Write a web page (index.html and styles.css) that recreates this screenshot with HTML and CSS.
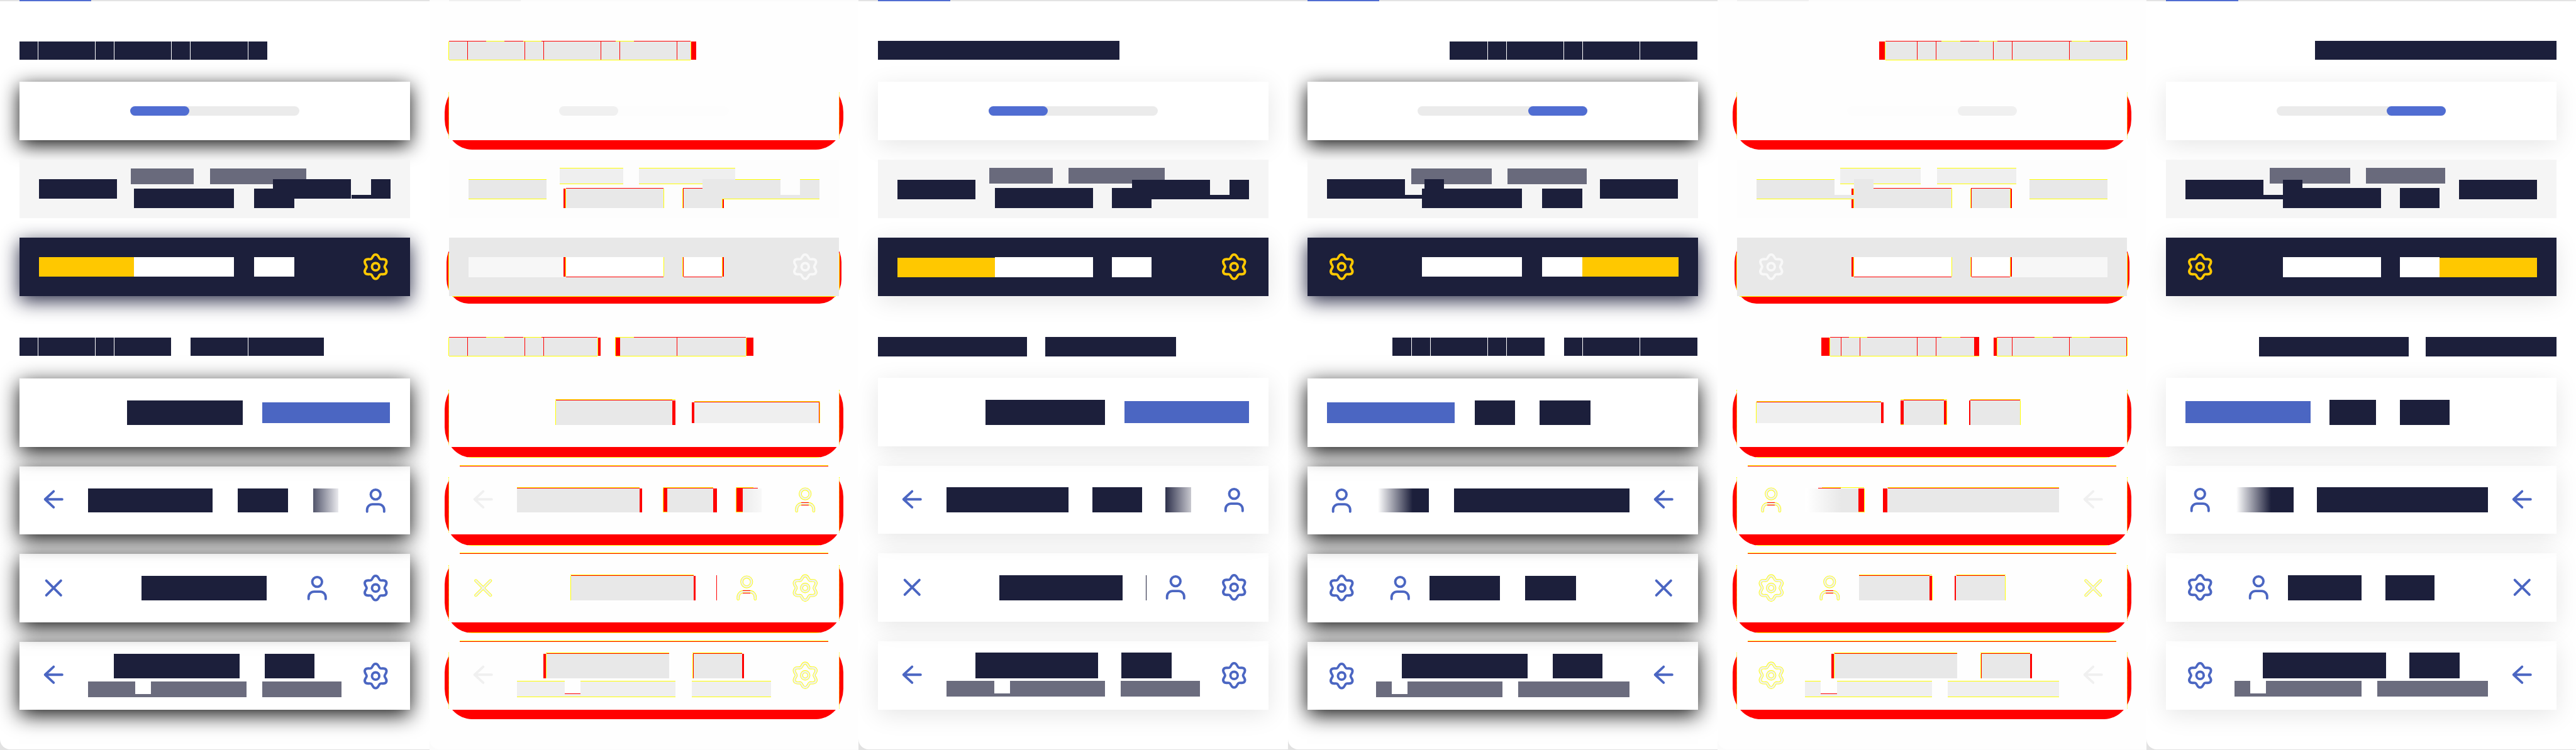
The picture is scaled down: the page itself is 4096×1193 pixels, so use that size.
FILE: index.html
```html
<!DOCTYPE html>
<html lang="en">
<head>
<meta charset="utf-8">
<title>Navigation bar snapshots</title>
<link rel="stylesheet" href="styles.css">
</head>
<body>
<svg class="defs" aria-hidden="true">
  <symbol id="gear" viewBox="-24 -24 48 48">
    <path d="M0-20C5-20 4.75-14.23 7.35-12.73C9.95-11.23 14.82-14.33 17.32-10C19.82-5.67 14.7-3 14.7 0C14.7 3 19.82 5.67 17.32 10C14.82 14.33 9.95 11.23 7.35 12.73C4.75 14.23 5 20 0 20C-5 20-4.75 14.23-7.35 12.73C-9.95 11.23-14.82 14.33-17.32 10C-19.82 5.67-14.7 3-14.7 0C-14.7-3-19.82-5.67-17.32-10C-14.82-14.33-9.95-11.23-7.35-12.73C-4.75-14.23-5-20 0-20Z"/>
    <circle r="6"/>
  </symbol>
  <symbol id="person" viewBox="-24 -24 48 48">
    <circle cy="-10" r="8"/>
    <path d="M-14 18V15A9 9 0 0 1-5 6H5A9 9 0 0 1 14 15V18"/>
  </symbol>
  <symbol id="arrow" viewBox="-24 -24 48 48">
    <path d="M0-13L-14 0L0 13M-14 0H14"/>
  </symbol>
  <symbol id="close" viewBox="-24 -24 48 48">
    <path d="M-12-12L12 12M12-12L-12 12"/>
  </symbol>
</svg>
<main class="board" id="board"></main>
<script src="panels.js"></script>
</body>
</html>
```
FILE: styles.css
```css
* { box-sizing: border-box; }

html, body {
  margin: 0;
  background: #fff;
  overflow: hidden;
}

.defs { display: none; }

.board {
  display: flex;
  width: 4224px;
  height: 1230px;
  zoom: 0.969697;
}

.panel {
  flex: none;
  width: 704px;
  height: 1230px;
  overflow: hidden;
  background: #e2e2e2;
}

.sheet {
  display: flex;
  flex-direction: column;
  height: 1229px;
  background: #fff;
  border-bottom-left-radius: 17px;
  overflow: hidden;
}

.tabs {
  flex: none;
  height: 2px;
  padding-left: 32px;
  background: #e3e3e3;
}
.tabs-mark { width: 118px; height: 2px; background: #506dd2; }

.heading { flex: none; display: grid; height: 32px; margin-top: 65px; }
.heading.second { margin-top: 67px; }

.card {
  flex: none;
  position: relative;
  height: 96px;
  margin: 32px 32px 0;
}
.heading + .card { margin-top: 35px; }
.heading.second + .card { margin-top: 36px; }
.card.tall { height: 112px; }
.panel.soft .heading.second + .card { margin-top: 35px; }
.card.n4 { z-index: 4; }
.card.n5 { z-index: 3; }
.card.n6 { z-index: 2; }
.card.n7 { z-index: 1; }

.face {
  position: relative;
  display: grid;
  height: 100%;
  background: #fff;
}
.card.muted .face { background: #f5f5f5; }
.card.dark .face { background: #1c1f3b; }

.hard .face { box-shadow: 0 8px 32px rgba(0, 0, 0, .95); }
.hard .dark .face { box-shadow: 0 8px 32px rgba(28, 31, 59, .95); }
.soft .face { box-shadow: 0 8px 40px rgba(0, 0, 0, .1); }
.hard .muted .face, .soft .muted .face, .diff .muted .face { box-shadow: none; }

.layer {
  grid-area: 1 / 1;
  display: flex;
  align-self: start;
}
.bar { flex: none; height: 100%; }

.k { background: #1c1f3b; }
.s { background: #6b6c7e; }
.m { background: #696a7c; }
.b { background: #4b66c2; }
.g { background: #ffc800; }
.w { background: #fff; }
.r { background: #f00; }
.y { background: #ff0; }
.e { background: #e8e8e8; }
.f { background: #efefef; }
.p { background: #f7f7f7; }
.fade-a { background: linear-gradient(90deg, #52556b, #eaeaee); }
.fade-c { background: linear-gradient(90deg, #2d304b, #c8c8cf); }
.fade-d { background: linear-gradient(90deg, #fff 0, #fff 3px, #1c1f3b 60px); }
.fade-b { background: linear-gradient(90deg, #ececec, #f8f8f8); }
.fade-e { background: linear-gradient(90deg, #fff 0, #fff 3px, #e8e8e8 60px); }

.track, .fill { height: 16px; border-radius: 8px; }
.track { display: flex; background: #ebebeb; }
.fill { width: 97px; background: #506dd2; }
.end .track { justify-content: flex-end; }

.icon {
  flex: none;
  width: 48px;
  height: 48px;
  fill: none;
  stroke: #4b66c2;
  stroke-width: 4;
  stroke-linecap: round;
  stroke-linejoin: round;
}
.dark .icon { stroke: #ffc800; }

/* difference panels */
.panel.diff { background: #fbfbfb; }
.diff .sheet { background: #fefefe; }
.diff .tabs { background: #fbfbfb; }
.diff .tabs-mark { background: #f0f0f0; }
.diff .track { background: #fdfdfd; }
.diff .fill { background: #f0f0f0; }
.diff .face { background: #fefefe; }
.diff .muted .face { background: #fdfdfd; }
.diff .dark .face { background: #e8e8e8; }
.diff .card { background: none; }
.diff .icon { stroke: #f0f0f0; }
.diff .dark .icon { stroke: #f8f8f8; }
.diff .icon.edge { stroke: #ff0; stroke-width: 4.8; }
.diff .icon.core { stroke-width: 3; }

.diff .card::before {
  content: "";
  position: absolute;
  inset: 0 -7px -15px;
  border-radius: 45px / 50px;
  background: #f00;
}
.diff .card.muted::before { display: none; }
.diff .card.dark::before { inset: 0 -4px -12px; border-radius: 36px / 40px; }
.diff .card.n4::before, .diff .card.n5::before, .diff .card.n6::before {
  bottom: -18px;
  background: linear-gradient(#ff0, #ff0) center bottom / 578px 1px no-repeat #f00;
}
.diff .face::before {
  content: "";
  position: absolute;
  inset: 18px -1px 3px;
  border: 0 dotted #ff0;
  border-width: 0 1px;
}
.diff .dark .face::before { inset: 26px -1px 10px; border-style: solid; }
.diff .muted .face::before { display: none; }
.diff .dark .face::after {
  content: "";
  position: absolute;
  inset: auto 5px -1px;
  height: 1px;
  background: #ff0;
}
.diff .n5::after, .diff .n6::after, .diff .n7::after {
  content: "";
  position: absolute;
  inset: -2px 18px auto;
  height: 2px;
  background: linear-gradient(#ff0 50%, #f00 50%);
}
```
FILE: panels.js
```js
// A layer is "top height | from to tone, ...", in panel coordinates.
// Icons are "name centre-x centre-y".

const TALL = [621, 765, 909, 1053];

const ticks = (tone, xs) => "68 30 | " + xs.map(x => `${x} ${x + 1} ${tone}`).join(", ");

const subLine = (top, first, cutA, cutB, endA, startB, tone) => [
  `${top} 26 | ${first} ${cutA} ${tone}, ${cutB} ${endA} ${tone}, ${startB} 560 ${tone}`,
  `${top + 21} 5 | ${cutA} ${cutB} ${tone}`
];

const subStart = (top, tone) => subLine(top, 144, 222, 248, 404, 430, tone);
const subEnd = (top, tone) => subLine(top, 144, 170, 196, 352, 378, tone);

const panels = [
  {
    kind: "hard start",
    h1: ["68 30 | 32 438 k", ticks("w", [62, 156, 187, 281, 312, 406])],
    h2: ["554 30 | 32 281 k, 313 531 k", "554 30 | 62 63 w, 156 157 w, 187 188 w, 406 407 w"],
    muted: ["276 26 | 214 318 m, 344 502 m", "309 32 | 220 384 k, 417 483 k", "294 32 | 64 192 k, 448 576 k, 608 640 k", "320 6 | 576 608 k"],
    dark: ["422 32 | 64 220 g, 220 384 w, 417 483 w"],
    darkIcon: 616,
    cards: [
      ["657 40 | 208 398 k", "660 34 | 430 639 b"],
      ["801 40 | 144 349 k, 390 472 k, 514 555 fade-a"],
      ["945 40 | 232 437 k"],
      ["1073 40 | 187 393 k, 434 516 k", ...subStart(1118, "s")]
    ],
    icons: [[], ["arrow 88 819", "person 616 821"], ["close 88 965", "person 520 965", "gear 616 965"], ["arrow 88 1107", "gear 616 1109"]]
  },
  {
    kind: "diff start",
    h1: ["67 1 | 32 93 r, 93 123 y, 123 154 r, 154 184 y, 184 306 r, 306 336 y, 336 428 r", "68 30 | 31 32 y, 32 428 e, 428 429 y, 429 438 r", ticks("r", [62, 156, 187, 281, 312, 406]), "98 1 | 32 428 y"],
    h2: ["553 1 | 32 93 r, 93 123 y, 123 154 r, 154 184 y, 184 276 r, 305 336 y, 336 519 r", "554 30 | 31 32 y, 32 276 e, 276 277 y, 277 281 r, 305 306 y, 306 313 r, 313 519 e, 519 520 y, 520 531 r", "554 30 | 62 63 r, 156 157 r, 187 188 r, 406 407 r", "584 1 | 32 276 y, 306 519 y"],
    muted: ["275 1 | 214 318 y, 344 502 y", "276 25 | 214 318 f, 344 502 f", "301 1 | 214 318 y, 344 502 y", "308 1 | 224 384 r, 416 481 r", "309 32 | 220 223 r, 223 224 y, 224 384 e, 384 385 y, 415 416 y, 416 417 r, 417 480 e, 480 481 y, 481 483 r", "294 32 | 64 192 e, 448 576 e, 608 640 e", "320 6 | 576 608 e", "294 1 | 64 192 y, 502 576 y, 608 640 y", "326 1 | 64 192 y, 481 640 y"],
    dark: ["422 33 | 64 220 p", "422 32 | 220 223 r, 223 224 y, 224 384 w, 384 385 y, 415 416 y, 416 417 r, 417 480 w, 480 481 y, 481 483 r", "454 1 | 224 384 r, 417 480 r"],
    darkIcon: 616,
    cards: [
      ["655 1 | 207 404 y", "656 1 | 208 398 r", "657 40 | 207 208 y, 208 398 e, 398 404 r", "658 1 | 435 641 y", "659 1 | 435 640 r", "660 34 | 430 435 r, 435 639 f, 639 640 r, 640 641 y"],
      ["799 1 | 144 345 y, 383 465 y, 503 532 y", "800 1 | 144 345 r, 384 465 r, 504 539 r", "801 40 | 144 345 e, 345 349 r, 383 384 y, 384 390 r, 390 465 e, 465 472 r, 503 504 y, 504 514 r, 514 545 fade-b", "840 1 | 384 390 y, 504 514 y"],
      ["943 1 | 231 433 y", "944 1 | 232 433 r", "944 41 | 471 472 r", "945 40 | 231 232 y, 232 433 e, 433 437 r"],
      ["1071 1 | 191 393 y, 431 513 y", "1072 1 | 192 393 r, 432 513 r", "1073 40 | 187 191 r, 191 192 y, 192 393 e, 431 432 y, 432 434 r, 434 513 e, 513 516 r", ...subStart(1118, "f"), "1117 1 | 144 222 y, 248 404 y, 430 560 y", "1143 1 | 144 404 y, 430 560 y", "1138 1 | 222 248 r"]
    ],
    icons: [[], ["arrow 88 819", "person 616 820 edge"], ["close 88 964.5 edge", "person 520 964.5 edge", "gear 616 964.5 edge"], ["arrow 88 1107", "gear 616 1108.5 edge"]]
  },
  {
    kind: "soft start",
    h1: ["67 31.5 | 31.5 428 k"],
    h2: ["553 31.5 | 31.5 276 k, 305.5 520 k"],
    muted: ["275 26 | 214 318 m, 344 502 m", "308 33 | 223.5 384.5 k, 415.5 480.5 k", "294.5 32 | 64 192 k, 448 576 k, 608 640 k", "320 6.5 | 576 608 k"],
    dark: ["422.5 32 | 64 223.5 g", "422 33 | 223.5 384.5 w, 415.5 480.5 w"],
    darkIcon: 616,
    cards: [
      ["655.5 41.5 | 207.5 404 k", "658.5 35.5 | 435.5 640.5 b"],
      ["799.5 41.5 | 144 344.5 k, 383 465 k, 503 545 fade-c"],
      ["943.5 41.5 | 231 432.5 k", "943.5 41.5 | 471 472 k"],
      ["1071 41.5 | 191 393 k, 431 513 k", ...subStart(1117, "s")]
    ],
    icons: [[], ["arrow 88 819", "person 616 820"], ["close 88 964", "person 520 964", "gear 616 964"], ["arrow 88 1107", "gear 616 1108"]]
  },
  {
    kind: "hard end",
    h1: ["68 30 | 265 671 k", ticks("w", [327, 358, 452, 483, 577])],
    h2: ["554 30 | 171 421 k, 453 671 k", "554 30 | 202 203 w, 233 234 w, 327 328 w, 358 359 w, 483 484 w, 577 578 w"],
    muted: ["276 26 | 202 334 m, 360 490 m", "309 32 | 220 384 k, 417 483 k", "294 32 | 64 192 k, 224 256 k, 512 640 k", "320 6 | 192 224 k"],
    dark: ["422 32 | 220 384 w, 417 483 w, 483 640 g"],
    darkIcon: 88,
    cards: [
      ["657 40 | 306 372 k, 413 496 k", "660 34 | 64 273 b"],
      ["801 40 | 144 231 fade-d, 272 560 k"],
      ["945 40 | 232 348 k, 389 472 k"],
      ["1073 40 | 187 393 k, 434 516 k", ...subEnd(1118, "s")]
    ],
    icons: [[], ["person 88 821", "arrow 616 819"], ["gear 88 965", "person 184 965", "close 616 965"], ["gear 88 1109", "arrow 616 1107"]]
  },
  {
    kind: "diff end",
    h1: ["67 1 | 276 368 r, 368 398 y, 398 429 r, 429 459 y, 459 581 r, 581 611 y, 611 672 r", "68 30 | 265 275 r, 275 276 y, 276 671 e, 671 672 r, 672 673 y", ticks("r", [327, 358, 452, 483, 577]), "98 1 | 276 672 y"],
    h2: ["553 1 | 185 216 r, 216 246 y, 246 368 r, 368 398 y, 398 429 r, 458 520 r, 520 550 y, 550 581 r, 581 611 y, 611 672 r", "554 30 | 171 184 r, 184 185 y, 185 421 e, 421 429 r, 453 458 r, 458 459 y, 459 671 e, 671 672 r, 672 673 y", "554 30 | 202 203 r, 233 234 r, 327 328 r, 358 359 r, 483 484 r, 577 578 r", "584 1 | 185 429 y, 458 672 y"],
    muted: ["275 1 | 202 334 y, 360 490 y", "276 25 | 202 334 f, 360 490 f", "301 1 | 202 334 y, 360 490 y", "308 1 | 256 384 r, 416 481 r", "309 32 | 220 223 r, 223 224 y, 224 384 e, 384 385 y, 415 416 y, 416 417 r, 417 480 e, 480 481 y, 481 483 r", "294 32 | 64 192 e, 224 256 e, 512 640 e", "320 6 | 192 224 e", "294 1 | 64 192 y, 512 640 y", "326 1 | 64 224 y, 512 640 y"],
    dark: ["422 33 | 483 640 p", "422 32 | 220 223 r, 223 224 y, 224 384 w, 384 385 y, 415 416 y, 416 417 r, 417 480 w, 480 481 y, 481 483 r", "454 1 | 224 384 r, 417 480 r"],
    darkIcon: 88,
    cards: [
      ["655 1 | 300 377 y, 415 497 y", "656 1 | 306 372 r, 415 496 r", "657 40 | 300 306 r, 306 372 e, 372 376 r, 376 377 y, 413 415 r, 415 496 e, 496 497 y", "658 1 | 64 269 y", "659 1 | 64 269 r", "660 34 | 63 64 y, 64 269 f, 269 273 r", "696 1 | 300 306 y, 372 377 y"],
      ["799 1 | 172 241 y, 279 560 y", "800 1 | 165 203 r, 280 560 r", "801 40 | 144 231 fade-e, 231 241 r, 241 242 y, 272 279 r, 279 560 e", "840 1 | 231 241 y"],
      ["943 1 | 232 352 y, 391 473 y", "944 1 | 232 348 r, 392 472 r", "945 40 | 232 348 e, 348 352 r, 352 353 y, 389 391 r, 391 472 e, 472 473 y"],
      ["1071 1 | 191 393 y, 431 513 y", "1072 1 | 192 393 r, 432 513 r", "1073 40 | 187 191 r, 191 192 y, 192 393 e, 431 432 y, 432 434 r, 434 513 e, 513 516 r", ...subEnd(1118, "f"), "1117 1 | 144 170 y, 196 352 y, 378 560 y", "1143 1 | 144 352 y, 378 560 y", "1138 1 | 170 196 r"]
    ],
    icons: [[], ["person 88 820 edge", "arrow 616 819"], ["gear 88 964.5 edge", "person 184 964.5 edge", "close 616 964.5 edge"], ["gear 88 1108.5 edge", "arrow 616 1107"]]
  },
  {
    kind: "soft end",
    h1: ["67 31.5 | 276 672.5 k"],
    h2: ["553 31.5 | 184.5 429.5 k, 458 672.5 k"],
    muted: ["275 26 | 202 334 m, 360 490 m", "308 33 | 223.5 384.5 k, 415.5 480.5 k", "294.5 32 | 64 192 k, 224 256 k, 512 640 k", "320 6.5 | 192 224 k"],
    dark: ["422.5 32 | 480.5 640 g", "422 33 | 223.5 384.5 w, 415.5 480.5 w"],
    darkIcon: 88,
    cards: [
      ["655.5 41.5 | 300 376.5 k, 415.5 497 k", "658.5 35.5 | 63.5 268.5 b"],
      ["799.5 41.5 | 144 241 fade-d, 279.5 560 k"],
      ["943.5 41.5 | 232 352.5 k, 391.5 472.5 k"],
      ["1071 41.5 | 191 393 k, 431 513 k", ...subEnd(1117, "s")]
    ],
    icons: [[], ["person 88 820", "arrow 616 819"], ["gear 88 964", "person 184 964", "close 616 964"], ["gear 88 1108", "arrow 616 1107"]]
  }
];

function layer(spec, left, top) {
  const [head, body] = spec.split(" | ");
  const [y, h] = head.split(" ").map(Number);
  let at = left;
  const bars = body.split(", ").map(part => {
    const [a, b, tone] = part.split(" ");
    const gap = a - at;
    at = +b;
    return `<i class="bar ${tone}" style="margin-left:${gap}px;width:${b - a}px"></i>`;
  }).join("");
  return `<div class="layer" style="margin-top:${y - top}px;height:${h}px">${bars}</div>`;
}

function icon(spec, top) {
  const [name, x, y, edge] = spec.split(" ");
  const draw = cls => `<div class="layer" style="margin:${y - top - 24}px 0 0 ${x - 32 - 24}px"><svg class="icon ${cls}"><use href="#${name}"/></svg></div>`;
  let out = edge ? draw("edge") + draw("core") : draw("");
  if (edge && name === "person") {
    const from = x - 6, to = +x + 6;
    out += layer(`${+y + 4} 1 | ${from} ${to} r`, 32, top) + layer(`${+y + 8} 1 | ${from} ${to} r`, 32, top);
  }
  return out;
}

const card = (cls, top, layers, icons = []) =>
  `<section class="card ${cls}"><div class="face">${layers.map(l => layer(l, 32, top)).join("")}${icons.map(i => icon(i, top)).join("")}</div></section>`;

const heading = (cls, top, layers) =>
  `<div class="heading ${cls}">${layers.map(l => layer(l, 0, top)).join("")}</div>`;

document.getElementById("board").innerHTML = panels.map(p => {
  const shift = p.kind.startsWith("soft") ? 1 : 0;
  return `<article class="panel ${p.kind}"><div class="sheet">
    <div class="tabs"><div class="tabs-mark"></div></div>
    ${heading("", 67, p.h1)}
    <section class="card"><div class="face"><div class="layer" style="margin:40px 0 0 181px"><div class="track" style="width:278px"><div class="fill"></div></div></div></div></section>
    ${card("muted", 262, p.muted)}
    ${card("dark", 390, p.dark, [`gear ${p.darkIcon} 438`])}
    ${heading("second", 553, p.h2)}
    ${p.cards.map((c, i) => card(`tall n${i + 4}`, TALL[i] - shift, c, p.icons[i])).join("")}
  </div></article>`;
}).join("");
```
